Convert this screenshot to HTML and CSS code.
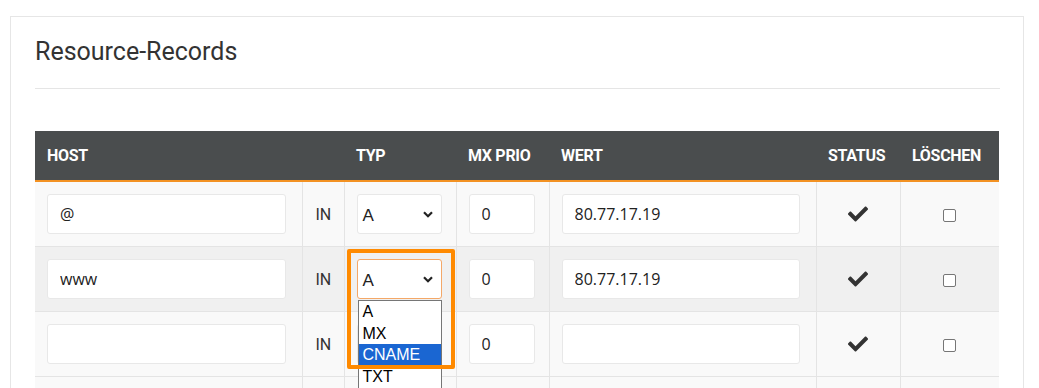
FILE: index.html
```html
<!DOCTYPE html>
<html lang="de">
<head>
  <meta charset="UTF-8">
  <title>Resource-Records</title>
  <link rel="stylesheet" href="styles.css">
</head>
<body>
  <div class="card">
    <h3 class="card-title">Resource-Records</h3>
    <hr>

    <table class="records">
      <colgroup>
        <col class="c-host">
        <col class="c-in">
        <col class="c-typ">
        <col class="c-prio">
        <col class="c-wert">
        <col class="c-status">
        <col class="c-del">
      </colgroup>
      <thead>
        <tr>
          <th>Host</th>
          <th></th>
          <th>Typ</th>
          <th>MX Prio</th>
          <th>Wert</th>
          <th>Status</th>
          <th>Löschen</th>
        </tr>
      </thead>
      <tbody>
        <tr>
          <td><input class="field host" type="text" value="@"></td>
          <td class="in">IN</td>
          <td>
            <div class="select">A
              <svg class="chevron" viewBox="0 0 10 7"><path d="M1 1.2 5 5.2 9 1.2" fill="none" stroke="#222" stroke-width="2.2"/></svg>
            </div>
          </td>
          <td><input class="field prio" type="text" value="0"></td>
          <td><input class="field wert" type="text" value="80.77.17.19"></td>
          <td class="center">
            <svg class="check" viewBox="0 0 512 400"><path d="M173.9 383.4 7.5 217c-10-10-10-26.2 0-36.2l36.2-36.2c10-10 26.2-10 36.2 0L192 256.7 432.1 16.6c10-10 26.2-10 36.2 0l36.2 36.2c10 10 10 26.2 0 36.2L210.1 383.4c-10 10-26.2 10-36.2 0z" fill="#333"/></svg>
          </td>
          <td class="center"><span class="box"></span></td>
        </tr>
        <tr class="active">
          <td><input class="field host" type="text" value="www"></td>
          <td class="in">IN</td>
          <td>
            <div class="typ-wrap">
              <div class="select focus">A
                <svg class="chevron" viewBox="0 0 10 7"><path d="M1 1.2 5 5.2 9 1.2" fill="none" stroke="#222" stroke-width="2.2"/></svg>
              </div>
              <ul class="dropdown">
                <li>A</li>
                <li>MX</li>
                <li class="picked">CNAME</li>
                <li>TXT</li>
              </ul>
              <div class="marker"></div>
            </div>
          </td>
          <td><input class="field prio" type="text" value="0"></td>
          <td><input class="field wert" type="text" value="80.77.17.19"></td>
          <td class="center">
            <svg class="check" viewBox="0 0 512 400"><path d="M173.9 383.4 7.5 217c-10-10-10-26.2 0-36.2l36.2-36.2c10-10 26.2-10 36.2 0L192 256.7 432.1 16.6c10-10 26.2-10 36.2 0l36.2 36.2c10 10 10 26.2 0 36.2L210.1 383.4c-10 10-26.2 10-36.2 0z" fill="#333"/></svg>
          </td>
          <td class="center"><span class="box"></span></td>
        </tr>
        <tr>
          <td><input class="field host" type="text" value=""></td>
          <td class="in">IN</td>
          <td>
            <div class="select">A
              <svg class="chevron" viewBox="0 0 10 7"><path d="M1 1.2 5 5.2 9 1.2" fill="none" stroke="#222" stroke-width="2.2"/></svg>
            </div>
          </td>
          <td><input class="field prio" type="text" value="0"></td>
          <td><input class="field wert" type="text" value=""></td>
          <td class="center">
            <svg class="check" viewBox="0 0 512 400"><path d="M173.9 383.4 7.5 217c-10-10-10-26.2 0-36.2l36.2-36.2c10-10 26.2-10 36.2 0L192 256.7 432.1 16.6c10-10 26.2-10 36.2 0l36.2 36.2c10 10 10 26.2 0 36.2L210.1 383.4c-10 10-26.2 10-36.2 0z" fill="#333"/></svg>
          </td>
          <td class="center"><span class="box"></span></td>
        </tr>
        <tr>
          <td></td><td></td><td></td><td></td><td></td><td></td><td></td>
        </tr>
      </tbody>
    </table>
  </div>
</body>
</html>
```

FILE: styles.css
```css
* {
  box-sizing: border-box;
}

body {
  margin: 0;
  padding: 16px 15px 0 10px;
  background: #fff;
  font-family: Roboto, "Liberation Sans", Arial, sans-serif;
  color: #333;
  overflow: hidden;
}

.card {
  background: #fff;
  border: 1px solid #e6e6e6;
  border-bottom: none;
  padding: 20px 23px 0 24px;
  height: 400px;
}

.card-title {
  margin: 0;
  font-size: 25px;
  font-weight: 400;
  line-height: 30px;
  color: #333;
}

hr {
  margin: 21px 0 42px;
  border: 0;
  border-top: 1px solid #e5e5e5;
}

/* Tabelle */
.records {
  width: 964px;
  border-collapse: collapse;
  table-layout: fixed;
}

.c-host { width: 267px; }
.c-in { width: 42px; }
.c-typ { width: 112px; }
.c-prio { width: 93px; }
.c-wert { width: 267px; }
.c-status { width: 84px; }
.c-del { width: 99px; }

.records th {
  background: #4a4d4e;
  color: #fff;
  font-size: 16px;
  font-weight: 700;
  text-transform: uppercase;
  text-align: left;
  height: 50px;
  padding: 0 12px;
  letter-spacing: -0.3px;
  white-space: nowrap;
  border-bottom: 2px solid #f39223;
}

.records td {
  background: #f9f9f9;
  border: 1px solid #e4e4e4;
  border-bottom: none;
  padding: 12px;
  height: 65px;
  vertical-align: middle;
}

.records thead + tbody tr:first-child td {
  border-top: none;
}

.records tr.active td {
  background: #f0f0f0;
}

.records td:first-child {
  border-left: none;
}

.records td:last-child {
  border-right: none;
}

.records td.in {
  font-size: 16px;
  padding: 12px 0 12px 13px;
}

.records td.center {
  text-align: center;
}

.field {
  display: block;
  height: 40px;
  padding: 0 12px;
  border: 1px solid #e8e8e8;
  border-radius: 3px;
  background: #fff;
  font-family: "Open Sans", "Liberation Sans", sans-serif;
  font-size: 16px;
  color: #222;
  outline: none;
}

.field.host { width: 239px; }
.field.prio { width: 66px; }
.field.wert { width: 238px; }

.select {
  position: relative;
  width: 85px;
  height: 40px;
  padding: 4px 0 0 5px;
  border: 1px solid #e8e8e8;
  border-radius: 3px;
  background: #fff;
  display: flex;
  align-items: center;
  font-family: "Liberation Sans", Arial, sans-serif;
  font-size: 17px;
  color: #222;
}

.select.focus {
  border-color: #f4a868;
}

.chevron {
  position: absolute;
  right: 8px;
  top: 16px;
  width: 10px;
  height: 7px;
}

.check {
  display: block;
  margin: 0 auto;
  width: 20px;
  height: 16px;
}

.box {
  display: inline-block;
  width: 13px;
  height: 13px;
  border: 1px solid #767676;
  border-radius: 2px;
  background: #fff;
  vertical-align: middle;
}

/* geöffnete Auswahl */
.typ-wrap {
  position: relative;
  width: 85px;
}

.dropdown {
  position: absolute;
  left: 1px;
  top: 41px;
  width: 84px;
  height: 110px;
  margin: 0;
  padding: 0;
  list-style: none;
  background: #fff;
  border: 1px solid #767676;
  font-family: "Liberation Sans", Arial, sans-serif;
  font-size: 16px;
  line-height: 18px;
  color: #000;
  z-index: 2;
}

.dropdown li {
  height: 21.5px;
  padding: 2px 0 0 4px;
}

.dropdown li.picked {
  background: #1a66d2;
  color: #fff;
}

.marker {
  position: absolute;
  left: -10px;
  top: -10px;
  width: 108px;
  height: 120px;
  border: 4px solid #ff8a00;
  border-radius: 2px;
  z-index: 3;
}
```
